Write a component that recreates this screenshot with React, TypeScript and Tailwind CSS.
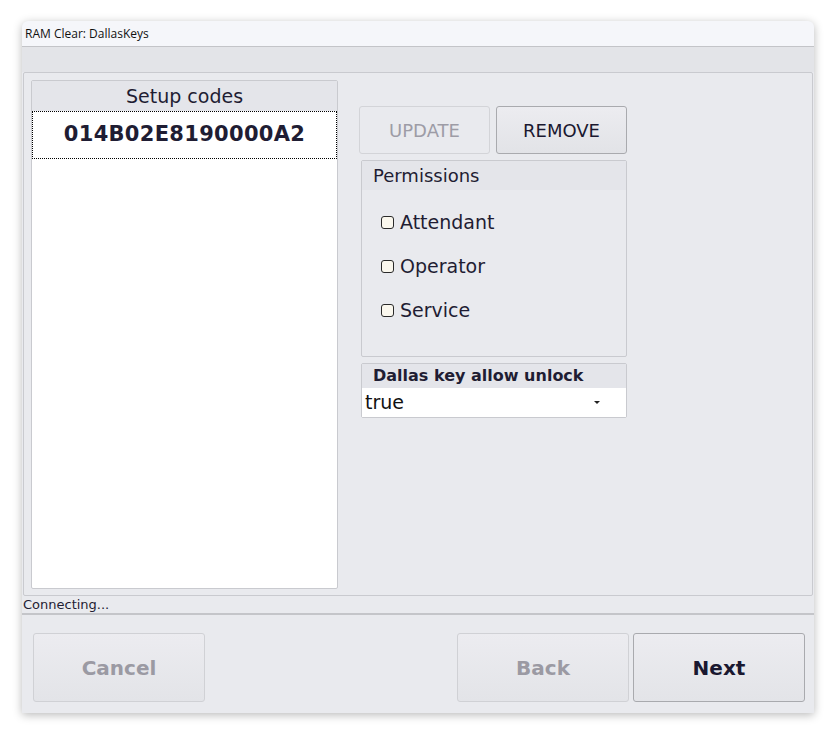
const dv = "font-['DejaVu_Sans',sans-serif]";

const Check = ({ label }: { label: string }) => (
  <div className="flex items-center h-[22px]">
    <span className="w-[13px] h-[13px] rounded-[3px] border-[1.5px] border-[#2a2a2a] bg-[#fbf8ee] ml-[19px] mr-[6px]" />
    <span className="text-[19px] text-[#1f1d33]">{label}</span>
  </div>
);

const BigButton = ({ label, disabled }: { label: string; disabled?: boolean }) => (
  <button
    className={`w-[172px] h-[69px] rounded-[3px] border text-[20px] font-bold bg-gradient-to-b from-[#ececf0] to-[#e3e4e8] ${
      disabled ? "border-[#d0d1d5] text-[#9b9aa3]" : "border-[#a9aaae] text-[#1a1830]"
    }`}
  >
    {label}
  </button>
);

export default function App() {
  return (
    <div className={`w-[836px] h-[735px] bg-white pt-[21px] pl-[22px] ${dv}`}>
      <div className="w-[792px] h-[692px] flex flex-col bg-[#e9eaee] rounded-t-[6px] shadow-[0_2px_10px_rgba(0,0,0,0.28)]">
        <div className="h-[26px] flex items-center px-[3px] rounded-t-[6px] bg-[#f5f6fa] border-b border-[#c3c4c8] font-['Open_Sans',sans-serif] text-[12px] text-[#111]">
          RAM Clear: DallasKeys
        </div>
        <div className="h-[25px] bg-[#e3e4e8]" />
        <div className="mx-[1px] h-[524px] border border-[#c9cacf] rounded-[2px] flex pt-[7px] pl-[7px]">
          <div className="w-[307px] h-[509px] border border-[#c9cacf] rounded-[2px] bg-white flex flex-col">
            <div className="h-[30px] bg-[#e4e5ea] flex items-center justify-center text-[19px] text-[#1f1d33]">
              Setup codes
            </div>
            <div className="h-[48px] border border-dotted border-black flex items-center justify-center text-[21px] font-bold text-[#1f1d33] tracking-[0.3px]">
              014B02E8190000A2
            </div>
          </div>
          <div className="flex flex-col ml-[21px] pt-[26px]">
            <div className="flex gap-[6px]">
              <button className="w-[131px] h-[48px] rounded-[3px] border border-[#d3d4d8] bg-[#e9eaee] text-[18px] text-[#9d9ca6]">
                UPDATE
              </button>
              <button className="w-[131px] h-[48px] rounded-[3px] border border-[#a9aaae] bg-gradient-to-b from-[#ececf0] to-[#e2e3e7] text-[18px] text-[#1a1830]">
                REMOVE
              </button>
            </div>
            <div className="ml-[2px] mt-[6px] w-[266px] h-[197px] border border-[#c9cacf] rounded-[2px] flex flex-col">
              <div className="h-[29px] bg-[#e4e5ea] flex items-center pl-[11px] text-[18px] text-[#1f1d33]">
                Permissions
              </div>
              <div className="flex flex-col gap-[22px] pt-[21px]">
                <Check label="Attendant" />
                <Check label="Operator" />
                <Check label="Service" />
              </div>
            </div>
            <div className="ml-[2px] mt-[6px] w-[266px] h-[55px] border border-[#c9cacf] rounded-[2px] flex flex-col">
              <div className="h-[24px] bg-[#e4e5ea] flex items-center pl-[11px] text-[16px] font-bold text-[#1f1d33]">
                Dallas key allow unlock
              </div>
              <div className="flex-1 bg-white flex items-center pl-[3px] pr-[26px] justify-between text-[19px] text-[#111]">
                <span>true</span>
                <span className="w-0 h-0 border-l-[3px] border-r-[3px] border-t-[3px] border-l-transparent border-r-transparent border-t-[#222]" />
              </div>
            </div>
          </div>
        </div>
        <div className="h-[19px] pl-[1px] flex items-center text-[13px] text-[#1f1d33] border-b-2 border-[#c4c5c9]">
          Connecting...
        </div>
        <div className="flex-1 flex pt-[18px] pl-[11px] pr-[9px]">
          <BigButton label="Cancel" disabled />
          <div className="flex-1" />
          <BigButton label="Back" disabled />
          <div className="w-[4px]" />
          <BigButton label="Next" />
        </div>
      </div>
    </div>
  );
}
